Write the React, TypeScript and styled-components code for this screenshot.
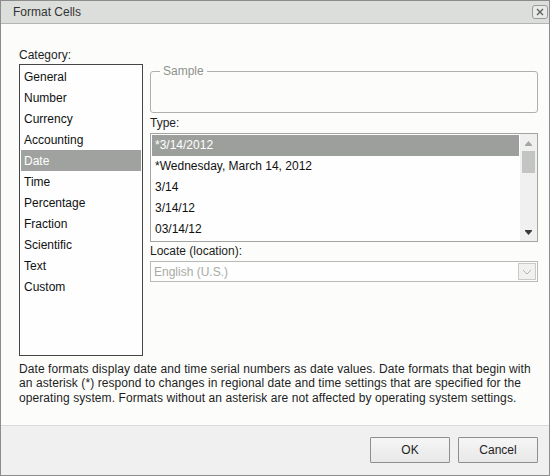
import React from "react";
import styled, { createGlobalStyle } from "styled-components";

const GlobalStyle = createGlobalStyle`
  html, body { margin: 0; padding: 0; background: #ffffff; }
  body { font-family: "Liberation Sans", Arial, sans-serif; font-size: 12px; }
  * { box-sizing: border-box; }
`;

const Window = styled.div`
  width: 550px;
  height: 476px;
  border: 1px solid #8c8c8c;
  display: flex;
  flex-direction: column;
  background: #fcfdfb;
  color: #1e1e1e;
`;

const TitleBar = styled.div`
  height: 23px;
  flex: none;
  border-bottom: 1px solid #b3b5b2;
  background: #dcdedb;
  display: flex;
  align-items: center;
  justify-content: space-between;
  padding: 0 1px 0 12px;
`;

const Title = styled.span`
  color: #333;
  font-size: 12px;
`;

const CloseButton = styled.button`
  width: 16px;
  height: 14px;
  padding: 0;
  border: 1px solid #9a9c99;
  border-radius: 3px;
  background: #e8eae7;
  display: flex;
  align-items: center;
  justify-content: center;
  margin-top: -1px;
`;

const Body = styled.div`
  flex: 1;
  padding: 22px 11px 0 18px;
  display: flex;
  flex-direction: column;
`;

const MainGrid = styled.div`
  display: grid;
  grid-template-columns: 124px 388px;
  grid-template-rows: 18px auto;
  column-gap: 7px;
`;

const Label = styled.div<{ $h: number }>`
  line-height: ${(p) => p.$h}px;
  height: ${(p) => p.$h}px;
  color: #1e1e1e;
`;

const CategoryList = styled.div`
  grid-column: 1;
  grid-row: 2;
  height: 292px;
  border: 1px solid #454545;
  padding: 1px;
  background: #fdfefd;
`;

const Item = styled.div<{ $selected?: boolean }>`
  height: 21px;
  line-height: 22px;
  padding-left: 3px;
  white-space: nowrap;
  background: ${(p) => (p.$selected ? "#a0a29f" : "transparent")};
  color: ${(p) => (p.$selected ? "#ffffff" : "#111111")};
`;

const TypeItem = styled(Item)`
  padding-left: 3px;
  line-height: 21px;
  background: ${(p) => (p.$selected ? "#9d9f9c" : "transparent")};
`;

const RightColumn = styled.div`
  grid-column: 2;
  grid-row: 2;
  display: flex;
  flex-direction: column;
`;

const SampleBox = styled.fieldset`
  margin: 0;
  padding: 0;
  height: 49px;
  border: 1px solid #aeb0ad;
  border-radius: 3px;
  min-width: 0;
`;

const Legend = styled.legend`
  margin-left: 9px;
  padding: 0 3px;
  line-height: 14px;
  color: #8f918e;
`;

const TypeList = styled.div`
  height: 109px;
  border: 1px solid #a3a5a2;
  display: flex;
  padding-left: 1px;
  background: #fdfefd;
`;

const TypeRows = styled.div`
  flex: 1;
  padding-top: 1px;
  margin-right: 1px;
  overflow: hidden;
`;

const Scrollbar = styled.div`
  width: 17px;
  flex: none;
  background: #f0f0f0;
  display: flex;
  flex-direction: column;
  align-items: center;
`;

const ScrollArrow = styled.div`
  width: 17px;
  height: 17px;
  display: flex;
  align-items: center;
  justify-content: center;
`;

const Track = styled.div`
  flex: 1;
  width: 17px;
  display: flex;
  justify-content: center;
`;

const Thumb = styled.div`
  width: 13px;
  height: 22px;
  background: #c3c5c2;
`;

const Select = styled.div`
  height: 21px;
  border: 1px solid #b8bab7;
  display: flex;
  align-items: center;
  justify-content: space-between;
  padding: 0 1px 0 3px;
  color: #a9aba8;
  background: #fdfefd;
`;

const SelectButton = styled.div`
  width: 18px;
  height: 17px;
  border: 1px solid #c9cbc8;
  background: #f1f2f0;
  display: flex;
  align-items: center;
  justify-content: center;
`;

const Description = styled.p`
  margin: 6px 0 0;
  line-height: 14.3px;
  letter-spacing: 0.08px;
  color: #1e1e1e;
  white-space: nowrap;
`;

const Footer = styled.div`
  height: 50px;
  flex: none;
  border-top: 1px solid #d9dbd8;
  background: #f0f0f0;
  display: flex;
  justify-content: flex-end;
  gap: 8px;
  padding: 11px 11px 0 0;
`;

const Button = styled.button`
  width: 80px;
  height: 26px;
  border: 1px solid #8e8e8e;
  border-radius: 1px;
  background: linear-gradient(#f6f6f6, #e8e8e8);
  font-family: "Liberation Sans", Arial, sans-serif;
  font-size: 12px;
  color: #1e1e1e;
  padding: 0;
`;

const categories = [
  "General",
  "Number",
  "Currency",
  "Accounting",
  "Date",
  "Time",
  "Percentage",
  "Fraction",
  "Scientific",
  "Text",
  "Custom",
];

const types = [
  "*3/14/2012",
  "*Wednesday, March 14, 2012",
  "3/14",
  "3/14/12",
  "03/14/12",
];

export default function App() {
  return (
    <>
      <GlobalStyle />
      <Window>
        <TitleBar>
          <Title>Format Cells</Title>
          <CloseButton aria-label="Close">
            <svg width="8" height="8" viewBox="0 0 8 8">
              <path d="M1 1L7 7M7 1L1 7" stroke="#5f615e" strokeWidth="1.4" />
            </svg>
          </CloseButton>
        </TitleBar>
        <Body>
          <MainGrid>
            <Label $h={18}>Category:</Label>
            <CategoryList>
              {categories.map((c) => (
                <Item key={c} $selected={c === "Date"}>
                  {c}
                </Item>
              ))}
            </CategoryList>
            <RightColumn>
              <SampleBox>
                <Legend>Sample</Legend>
              </SampleBox>
              <Label $h={20}>Type:</Label>
              <TypeList>
                <TypeRows>
                  {types.map((t, i) => (
                    <TypeItem key={t} $selected={i === 0}>
                      {t}
                    </TypeItem>
                  ))}
                </TypeRows>
                <Scrollbar>
                  <ScrollArrow>
                    <svg width="9" height="6" viewBox="0 0 9 6">
                      <path d="M4.5 1L8 5H1Z" fill="#a6a8a5" />
                      <rect x="1" y="5" width="7" height="1" fill="#a6a8a5" />
                    </svg>
                  </ScrollArrow>
                  <Track>
                    <Thumb />
                  </Track>
                  <ScrollArrow>
                    <svg width="9" height="6" viewBox="0 0 9 6">
                      <rect x="1" y="0" width="7" height="1" fill="#3c3c3c" />
                      <path d="M1 1H8L4.5 5Z" fill="#3c3c3c" />
                    </svg>
                  </ScrollArrow>
                </Scrollbar>
              </TypeList>
              <Label $h={19}>Locate (location):</Label>
              <Select>
                <span>English (U.S.)</span>
                <SelectButton>
                  <svg width="10" height="6" viewBox="0 0 10 6">
                    <path d="M1 1L5 5L9 1" fill="none" stroke="#b3b5b2" strokeWidth="1" />
                  </svg>
                </SelectButton>
              </Select>
            </RightColumn>
          </MainGrid>
          <Description>
            Date formats display date and time serial numbers as date values. Date formats that begin with
            <br />
            an asterisk (*) respond to changes in regional date and time settings that are specified for the
            <br />
            operating system. Formats without an asterisk are not affected by operating system settings.
          </Description>
        </Body>
        <Footer>
          <Button>OK</Button>
          <Button>Cancel</Button>
        </Footer>
      </Window>
    </>
  );
}
